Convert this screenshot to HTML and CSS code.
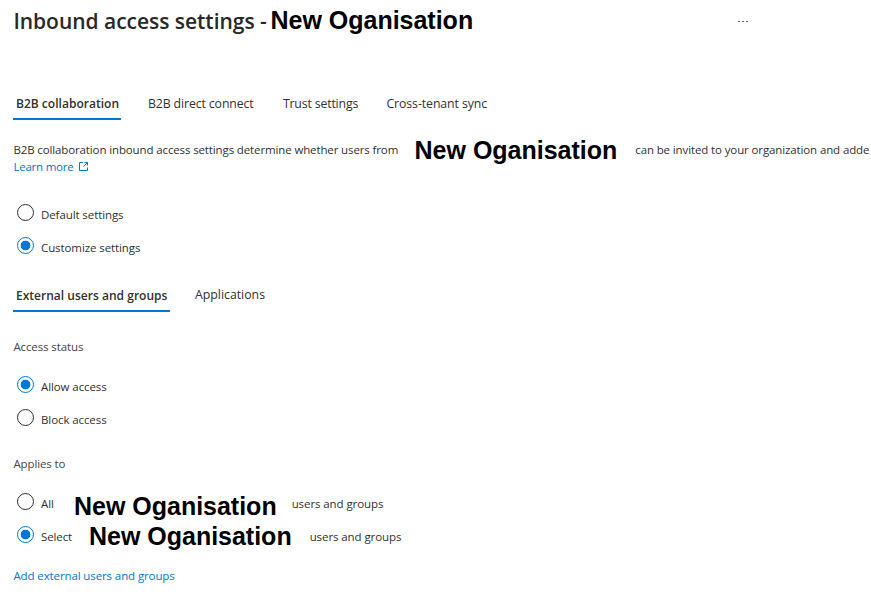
FILE: index.html
```html
<!DOCTYPE html>
<html lang="en">
<head>
<meta charset="utf-8">
<title>Inbound access settings</title>
<link rel="stylesheet" href="styles.css">
</head>
<body>
<main class="page">
  <header class="title-bar">
    <h1 class="title">Inbound access settings -</h1>
    <strong class="org">New Oganisation</strong>
    <button class="more" aria-label="More"><i></i><i></i><i></i></button>
  </header>
  <nav class="tabs main-tabs">
    <a class="tab active">B2B collaboration</a>
    <a class="tab direct">B2B direct connect</a>
    <a class="tab trust">Trust settings</a>
    <a class="tab sync">Cross-tenant sync</a>
  </nav>
  <p class="description">
    <span class="lead">B2B collaboration inbound access settings determine whether users from</span>
    <strong class="org">New Oganisation</strong>
    <span class="rest">can be invited to your organization and adde</span>
  </p>
  <a class="link learn">Learn more
    <svg class="external" viewBox="0 0 10 10"><path d="M4 .5H.5V8.5H8.5V5.5M5.5 .5H8.5V3.5M8.5 .5L4.5 4.5"/></svg>
  </a>
  <section class="options mode">
    <label class="option"><span class="radio"></span><span class="text">Default settings</span></label>
    <label class="option"><span class="radio checked"></span><span class="text">Customize settings</span></label>
  </section>
  <nav class="tabs sub-tabs">
    <a class="tab active">External users and groups</a>
    <a class="tab apps">Applications</a>
  </nav>
  <h2 class="heading status">Access status</h2>
  <section class="options">
    <label class="option"><span class="radio checked"></span><span class="text">Allow access</span></label>
    <label class="option"><span class="radio"></span><span class="text">Block access</span></label>
  </section>
  <h2 class="heading applies">Applies to</h2>
  <section class="options">
    <label class="option all"><span class="radio"></span><span class="text who">All</span><strong class="org">New Oganisation</strong><span class="text">users and groups</span></label>
    <label class="option select"><span class="radio checked"></span><span class="text who">Select</span><strong class="org">New Oganisation</strong><span class="text">users and groups</span></label>
  </section>
  <a class="link add">Add external users and groups</a>
</main>
</body>
</html>
```
FILE: styles.css
```css
* { box-sizing: border-box; }
body {
  margin: 0;
  background: #fff;
  color: #323130;
  font: 11.5px/16px "Open Sans", "Noto Sans", sans-serif;
  letter-spacing: -0.11px;
  overflow: hidden;
}
.page { height: 603px; padding-left: 13.4px; overflow: hidden; white-space: nowrap; }
.title-bar { display: flex; align-items: center; height: 42px; }
.title { margin: 0; width: 257.1px; font-size: 21px; font-weight: 600; line-height: 28px; letter-spacing: -0.03px; color: #292827; }
.org { font: bold 25px/28px "Liberation Sans", sans-serif; letter-spacing: -0.01px; color: #000; flex: none; }
.title-bar .org { margin-top: -2px; }
.more { display: flex; gap: 2px; margin-left: 265px; padding: 0; border: 0; background: none; }
.more i { width: 2px; height: 1px; background: #666; }
.tabs { display: flex; height: 33px; font-size: 12.3px; line-height: 33px; }
.tab.active { font-weight: 600; font-size: 12px; line-height: 34px; letter-spacing: 0.02px; padding-left: 2.6px; border-bottom: 2px solid #0078d4; }
.main-tabs { margin-top: 45px; height: 33px; }
.main-tabs .active { width: 108px; }
.direct { width: 135px; margin-left: 26.5px; }
.trust { width: 103.5px; letter-spacing: -0.16px; }
.sync { letter-spacing: -0.08px; }
.description { display: flex; align-items: center; height: 18px; margin: 21px 0 0; }
.lead { flex: none; width: 401.2px; letter-spacing: -0.125px; }
.rest { margin-left: 18px; letter-spacing: -0.12px; }
.link { display: flex; align-items: center; height: 16px; color: #0078d4; }
.learn { letter-spacing: -0.22px; }
.external { width: 10px; height: 10px; margin-left: 5.6px; fill: none; stroke: currentColor; stroke-width: 1; }
.options { padding-left: 3.6px; }
.mode { margin-top: 21px; }
.option { display: flex; align-items: center; height: 33px; }
.radio { flex: none; width: 17px; height: 17px; border: 1px solid #323130; border-radius: 50%; margin-right: 7px; }
.radio.checked { border-color: #0078d4; background: radial-gradient(circle, #0078d4 4.5px, transparent 5.2px); }
.option .text { position: relative; top: 2px; }
.option .text:last-child { letter-spacing: -0.09px; }
.sub-tabs { margin-top: 17px; letter-spacing: 0; }
.sub-tabs .active { width: 157px; }
.apps { margin-left: 24.6px; line-height: 32px; }
.heading { margin: 0; font-size: 11.5px; font-weight: 400; line-height: 16px; color: #484644; }
.status { margin-top: 27px; margin-bottom: 13px; }
.applies { margin-top: 22px; margin-bottom: 13px; }
.all .who { width: 33px; }
.select .who { width: 48px; }
.all .org { position: relative; top: 4px; margin-right: 15px; }
.select .org { position: relative; top: 1px; margin-right: 18px; }
.add { margin-top: 17px; }
```
